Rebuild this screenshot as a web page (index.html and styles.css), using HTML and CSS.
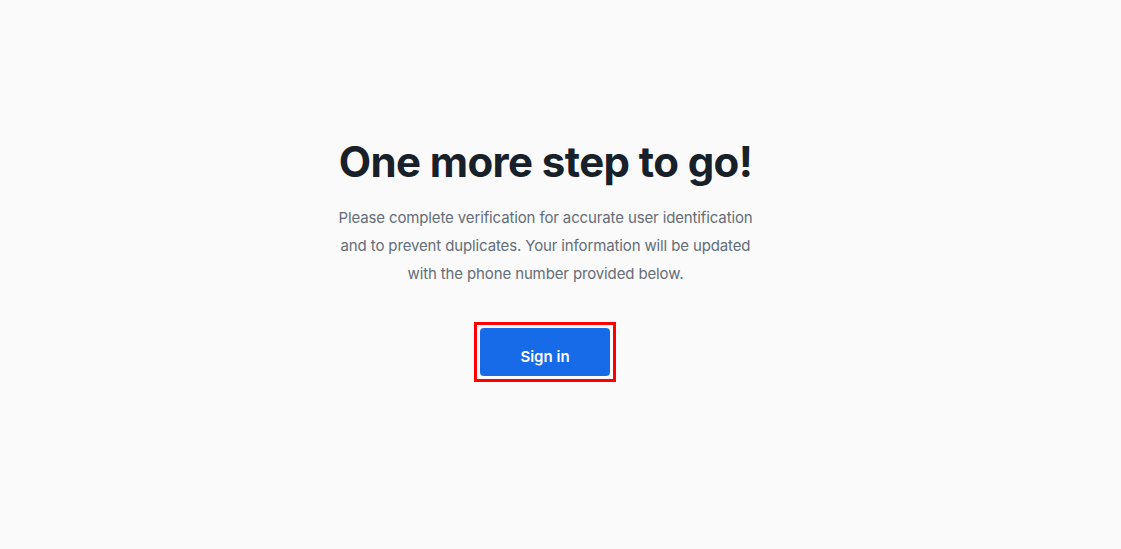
FILE: index.html
```html
<!DOCTYPE html>
<html lang="en">
<head>
<meta charset="utf-8">
<title>One more step to go!</title>
<link rel="stylesheet" href="styles.css">
</head>
<body>
<main class="page">
  <section class="card">
    <h1 class="title">One more step to go!</h1>
    <p class="desc">Please complete verification for accurate user identification and to prevent duplicates. Your information will be updated with the phone number provided below.</p>
    <div class="actions">
      <span class="focus-ring">
        <button class="btn" type="button">Sign in</button>
      </span>
    </div>
  </section>
</main>
</body>
</html>
```
FILE: styles.css
```css
* { box-sizing: border-box; }
html, body { margin: 0; padding: 0; }
body {
  background: #fafafa;
  font-family: Inter, "Noto Sans", sans-serif;
  color: #18202a;
}
.page {
  min-height: 549px;
  display: flex;
  justify-content: center;
  padding-top: 134px;
  padding-right: 30px;
}
.card {
  width: 430px;
  display: flex;
  flex-direction: column;
  align-items: center;
  text-align: center;
}
.title {
  margin: 0;
  font-size: 42px;
  line-height: 56px;
  font-weight: 700;
  letter-spacing: -0.6px;
  color: #18202a;
}
.desc {
  margin: 14px 0 0;
  font-size: 15px;
  line-height: 28px;
  letter-spacing: -0.13px;
  color: #646d78;
}
.actions {
  margin-top: 34px;
  display: flex;
  justify-content: center;
  padding-right: 1px;
}
.focus-ring {
  display: flex;
  padding: 3px;
  border: 3px solid #ff0000;
}
.btn {
  width: 130px;
  height: 48px;
  padding: 8px 0 0;
  border: 0;
  border-radius: 4px;
  background: #176be8;
  color: #ffffff;
  font-family: Inter, "Noto Sans", sans-serif;
  font-size: 15px;
  font-weight: 600;
  cursor: pointer;
}
```
